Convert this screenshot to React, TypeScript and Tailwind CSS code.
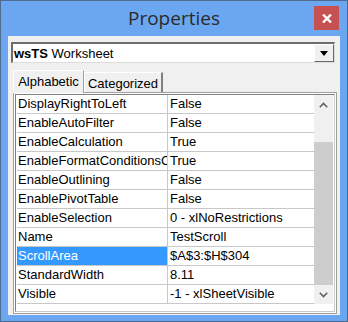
import React from 'react';

const rows: [string, string][] = [
  ['DisplayRightToLeft', 'False'],
  ['EnableAutoFilter', 'False'],
  ['EnableCalculation', 'True'],
  ['EnableFormatConditionsCalculation', 'True'],
  ['EnableOutlining', 'False'],
  ['EnablePivotTable', 'False'],
  ['EnableSelection', '0 - xlNoRestrictions'],
  ['Name', 'TestScroll'],
  ['ScrollArea', '$A$3:$H$304'],
  ['StandardWidth', '8.11'],
  ['Visible', '-1 - xlSheetVisible'],
];

const uiFont = { fontFamily: '"Liberation Sans", Arial, sans-serif' };

const App: React.FC = () => {
  return (
    <div className="w-[348px] h-[322px] bg-[#6ba6f1] border border-[#4f6a8f] flex flex-col" style={uiFont}>
      {/* Title bar */}
      <div className="h-[35px] grid grid-cols-[1fr_auto_1fr] items-start">
        <div />
        <div
          className="pt-[4px] text-[19px] leading-[26px] text-[#2b2b2b]"
          style={{ fontFamily: '"Open Sans", "Noto Sans", sans-serif' }}
        >
          Properties
        </div>
        <div className="flex justify-end pt-[5px] pr-[8px]">
          <div className="w-[25px] h-[24px] bg-[#c75050] flex items-center justify-center">
            <svg width="10" height="9" viewBox="0 0 10 9">
              <path d="M1 0.5 L9 8.5 M9 0.5 L1 8.5" stroke="#fff" strokeWidth="2.4" />
            </svg>
          </div>
        </div>
      </div>

      {/* Client area */}
      <div className="flex-1 mx-[7px] mb-[6px] bg-[#f0f0f0] flex flex-col">
        {/* Object combo */}
        <div className="mt-[6px] ml-[3px] w-[324px] h-[21px] bg-white border-t-2 border-l-2 border-t-[#6d6d6d] border-l-[#6d6d6d] border-b border-r border-b-[#dcdcdc] border-r-[#dcdcdc] flex items-center">
          <div className="flex-1 pl-[1px] text-[13px] leading-[17px] text-black">
            <span className="font-bold">wsTS</span> Worksheet
          </div>
          <div className="w-[20px] h-[18px] bg-[#f0f0f0] border border-t-white border-l-white border-b-[#696969] border-r-[#696969] flex items-center justify-center">
            <svg width="8" height="5" viewBox="0 0 8 5">
              <path d="M0 0 H8 L4 5 Z" fill="#000" />
            </svg>
          </div>
        </div>

        {/* Tabs */}
        <div className="mt-[6px] ml-[5px] flex items-end h-[23px]">
          <div className="h-[23px] w-[71px] border-t border-l border-r border-t-white border-l-white border-r-[#a0a0a0] bg-[#f0f0f0] flex items-start justify-center pt-[3px] text-[13px] leading-[16px] text-black -mb-px z-10">
            Alphabetic
          </div>
          <div className="h-[20px] w-[79px] border-t border-r-2 border-t-white border-r-[#808080] border-l border-l-white flex items-start justify-center pt-[3px] text-[13px] leading-[16px] text-black">
            Categorized
          </div>
        </div>

        {/* Property grid */}
        <div className="ml-[5px] w-[324px] h-[222px] border border-[#a0a0a0]">
          <div className="h-full border border-white">
            <div className="h-full border border-t-[#808080] border-l-[#808080] border-b-[#c8c8c8] border-r-[#c8c8c8] bg-white flex pl-px pb-[6px]">
              <div className="flex-1 flex flex-col">
                {rows.map(([name, value]) => {
                  const selected = name === 'ScrollArea';
                  return (
                    <div key={name} className="h-[19px] flex border-b border-[#c8c8c8] text-[13px] leading-[18px]">
                      <div
                        className={
                          'w-[151px] border-r border-[#c8c8c8] pl-[1px] overflow-hidden whitespace-nowrap ' +
                          (selected ? 'bg-[#3399ff] text-white' : 'text-black')
                        }
                      >
                        {name}
                      </div>
                      <div className="flex-1 pl-[2px] overflow-hidden whitespace-nowrap text-black">{value}</div>
                    </div>
                  );
                })}
              </div>
              {/* Scrollbar */}
              <div className="w-[19px] h-[209px] bg-[#f0f0f0] flex flex-col">
                <div className="h-[19px] flex items-center justify-center">
                  <svg width="9" height="6" viewBox="0 0 9 6">
                    <path d="M0.8 5.2 L4.5 1.5 L8.2 5.2" stroke="#606060" strokeWidth="1.6" fill="none" />
                  </svg>
                </div>
                <div className="h-[28px]" />
                <div className="flex-1 bg-[#cdcdcd]" />
                <div className="h-[19px] flex items-center justify-center">
                  <svg width="9" height="6" viewBox="0 0 9 6">
                    <path d="M0.8 0.8 L4.5 4.5 L8.2 0.8" stroke="#606060" strokeWidth="1.6" fill="none" />
                  </svg>
                </div>
              </div>
              <div className="w-[1px]" />
            </div>
          </div>
        </div>
      </div>
    </div>
  );
};

export default App;
